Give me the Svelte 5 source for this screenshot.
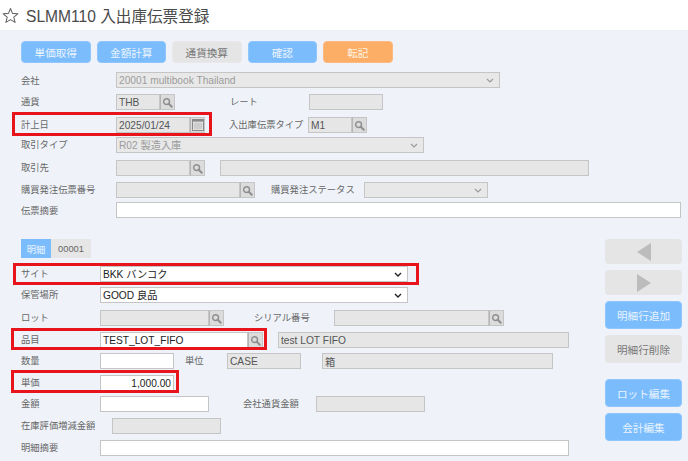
<script>
  const actions = [
    { label: '単価取得', tone: 'blue' },
    { label: '金額計算', tone: 'blue' },
    { label: '通貨換算', tone: 'gray' },
    { label: '確認', tone: 'blue' },
    { label: '転記', tone: 'orange' }
  ];
</script>

{#snippet lens()}
  <svg class="lens" viewBox="0 0 12 12" aria-hidden="true">
    <circle cx="5" cy="5" r="3.2" fill="none" stroke="#8f8f8f" stroke-width="1.6" />
    <path d="M7.4 7.4 L10.6 10.6" stroke="#8f8f8f" stroke-width="2.2" stroke-linecap="round" />
  </svg>
{/snippet}

<div class="page">
  <header class="head">
    <svg class="star" viewBox="0 0 16 16" aria-hidden="true">
      <path d="M8 1.4 L9.9 6 L14.9 6.4 L11.1 9.6 L12.3 14.5 L8 11.9 L3.7 14.5 L4.9 9.6 L1.1 6.4 L6.1 6 Z" fill="none" stroke="#666" stroke-width="1" stroke-linejoin="round" />
    </svg>
    <h1>SLMM110 入出庫伝票登録</h1>
  </header>

  <main class="panel">
    <div class="actions">
      {#each actions as a}
        <button class="act {a.tone}">{a.label}</button>
      {/each}
    </div>

    <div class="row m9">
      <span class="lab up flat">会社</span>
      <select class="f off w384" disabled><option>20001 multibook Thailand</option></select>
    </div>
    <div class="row m6">
      <span class="lab up">通貨</span>
      <div class="grp"><input class="f off dark w44" disabled value="THB" /><span class="sb">{@render lens()}</span></div>
      <span class="lab side g55">レート</span>
      <input class="f off w74" disabled />
    </div>
    <div class="row m7">
      <span class="mark mark-date"></span>
      <span class="lab up">計上日</span>
      <div class="grp">
        <input class="f off dark w74" disabled value="2025/01/24" />
        <span class="sb">
          <svg class="cal" viewBox="0 0 12 12" aria-hidden="true">
            <rect x="0.5" y="0.5" width="11" height="11" fill="#f4f4f4" stroke="#8a8a8a" />
            <rect x="0.5" y="0.5" width="11" height="2.2" fill="#8a8a8a" />
            <path d="M1 5 H11 M1 7 H11 M1 9 H11 M3 3 V11 M5 3 V11 M7 3 V11 M9 3 V11" stroke="#aaa" stroke-width="0.6" />
          </svg>
        </span>
      </div>
      <span class="lab side g24">入出庫伝票タイプ</span>
      <div class="grp"><input class="f off dark w44" disabled value="M1" /><span class="sb">{@render lens()}</span></div>
    </div>
    <div class="row m4">
      <span class="lab up">取引タイプ</span>
      <select class="f off w308" disabled><option>R02 製造入庫</option></select>
    </div>
    <div class="row m7">
      <span class="lab up">取引先</span>
      <div class="grp"><input class="f off w74" disabled /><span class="sb">{@render lens()}</span></div>
      <input class="f off w369 g15" disabled />
    </div>
    <div class="row m6">
      <span class="lab up">購買発注伝票番号</span>
      <div class="grp"><input class="f off w124" disabled /><span class="sb">{@render lens()}</span></div>
      <span class="lab side g16">購買発注ステータス</span>
      <select class="f off w124 g9" disabled><option></option></select>
    </div>
    <div class="row m4">
      <span class="lab up flat">伝票摘要</span>
      <input class="f grow" />
    </div>

    <div class="lower">
      <div class="detail">
        <div class="tabs">
          <span class="tab on">明細</span>
          <span class="tab">00001</span>
        </div>
        <div class="row m8">
          <span class="mark mark-site"></span>
          <span class="lab low">サイト</span>
          <select class="f w308"><option>BKK バンコク</option></select>
        </div>
        <div class="row m5">
          <span class="lab low">保管場所</span>
          <select class="f w308"><option>GOOD 良品</option></select>
        </div>
        <div class="row m7">
          <span class="lab low">ロット</span>
          <div class="grp"><input class="f off w109" disabled /><span class="sb">{@render lens()}</span></div>
          <span class="lab side g30">シリアル番号</span>
          <div class="grp"><input class="f off w155" disabled /><span class="sb">{@render lens()}</span></div>
        </div>
        <div class="row m6">
          <span class="mark mark-item"></span>
          <span class="lab low">品目</span>
          <div class="grp"><input class="f w148" value="TEST_LOT_FIFO" /><span class="sb">{@render lens()}</span></div>
          <input class="f off dark w291 g15" disabled value="test LOT FIFO" />
        </div>
        <div class="row m5">
          <span class="lab low">数量</span>
          <input class="f w74" />
          <span class="lab side g11">単位</span>
          <input class="f off dark w74" disabled value="CASE" />
          <input class="f off dark w231 g21" disabled value="箱" />
        </div>
        <div class="row m6">
          <span class="mark mark-price"></span>
          <span class="lab low">単価</span>
          <input class="f w74 num" value="1,000.00" />
        </div>
        <div class="row m5">
          <span class="lab low">金額</span>
          <input class="f w109" />
          <span class="lab side g34">会社通貨金額</span>
          <input class="f off w109" disabled />
        </div>
        <div class="row m6">
          <span class="lab wide">在庫評価増減金額</span>
          <input class="f off w109" disabled />
        </div>
        <div class="row m6">
          <span class="lab low">明細摘要</span>
          <input class="f w469" />
        </div>
      </div>

      <aside class="side-col">
        <button class="sbtn gray nav" aria-label="前へ">
          <svg viewBox="0 0 14 18" aria-hidden="true"><path d="M14 0 V18 L0 9 Z" fill="#bcbcbc" /></svg>
        </button>
        <button class="sbtn gray nav" aria-label="次へ">
          <svg viewBox="0 0 14 18" aria-hidden="true"><path d="M0 0 V18 L14 9 Z" fill="#bcbcbc" /></svg>
        </button>
        <button class="sbtn blue">明細行追加</button>
        <button class="sbtn gray">明細行削除</button>
        <button class="sbtn blue sep">ロット編集</button>
        <button class="sbtn blue">会計編集</button>
      </aside>
    </div>
  </main>
</div>

<style>
  :global(body) {
    margin: 0;
    background: #eff3f9;
  }
  .page {
    width: 688px;
    height: 461px;
    overflow: hidden;
    font-family: "Liberation Sans", "Noto Sans CJK JP", sans-serif;
    color: #666;
    font-size: 9.3px;
  }
  .head {
    height: 30px;
    background: #fff;
    display: flex;
    align-items: center;
    padding-left: 2px;
    box-sizing: border-box;
    gap: 7px;
  }
  .star { width: 17px; height: 17px; flex: none; }
  h1 {
    margin: 0;
    font-size: 15.6px;
    font-weight: 400;
    color: #4a4a4a;
    white-space: nowrap;
  }
  .panel {
    padding: 11px 6px 0 21px;
  }
  .actions { display: flex; gap: 6px; }
  .act {
    width: 69.5px;
    height: 22px;
    padding: 0;
    border-radius: 4px;
    font: inherit;
    font-size: 10.6px;
    border: 1px solid transparent;
  }
  .blue { background: #7bbcfd; color: #eaf4ff; border-color: #8fc6fd; }
  .gray { background: #e5e5e5; color: #777; border-color: #e8e8e8; }
  .orange { background: #fcae66; color: #fff3e4; border-color: #fdb981; }

  .row {
    position: relative;
    display: flex;
    align-items: center;
    height: 16px;
  }
  .m4 { margin-top: 4px; }
  .m5 { margin-top: 5px; }
  .m6 { margin-top: 6px; }
  .m7 { margin-top: 7px; }
  .m8 { margin-top: 8px; }
  .m9 { margin-top: 9px; }

  .lab { flex: none; white-space: nowrap; position: relative; top: -1px; }
  .flat { top: 0; }
  .up { width: 95px; }
  .low { width: 79px; }
  .wide { width: 91px; }
  .side { color: #666; }

  .f {
    box-sizing: border-box;
    height: 16px;
    border: 1px solid #c5c5c5;
    background: #fff;
    color: #222;
    font: inherit;
    font-size: 10.2px;
    padding: 0 2px;
    margin: 0;
    border-radius: 0;
    outline: none;
    flex: none;
  }
  select.f {
    appearance: none;
    padding: 0 14px 0 2px;
    background-color: #fff;
    background-repeat: no-repeat;
    background-position: right 5px center;
    background-size: 8px 5px;
    background-image: url("data:image/svg+xml,%3Csvg xmlns='http://www.w3.org/2000/svg' viewBox='0 0 8 5'%3E%3Cpath d='M1 1l3 3 3-3' fill='none' stroke='%23222' stroke-width='1.4'/%3E%3C/svg%3E");
  }
  .off { background: #e6e6e6; color: #9c9c9c; opacity: 1; }
  select.off {
    background-color: #e8e8e8;
    background-image: url("data:image/svg+xml,%3Csvg xmlns='http://www.w3.org/2000/svg' viewBox='0 0 8 5'%3E%3Cpath d='M1 1l3 3 3-3' fill='none' stroke='%23999' stroke-width='1.1'/%3E%3C/svg%3E");
  }
  .dark { color: #555; -webkit-text-fill-color: #555; }
  .num { text-align: right; }
  .grow { flex: 1; min-width: 0; margin-right: 1px; }

  .w44 { width: 44px; }
  .w74 { width: 74px; }
  .w109 { width: 109px; }
  .w124 { width: 124px; }
  .w148 { width: 148px; }
  .w155 { width: 155px; }
  .w231 { width: 231px; }
  .w291 { width: 291px; }
  .w308 { width: 308px; }
  .w369 { width: 369px; }
  .w384 { width: 384px; }
  .w469 { width: 469px; }

  .g9 { margin-left: 9px; }
  .g15 { margin-left: 15px; }
  .g21 { margin-left: 21px; }
  .g11 { margin-left: 11px; width: 42px; }
  .g16 { margin-left: 16px; width: 84px; }
  .g24 { margin-left: 24px; width: 79px; }
  .g30 { margin-left: 30px; width: 80px; }
  .g34 { margin-left: 34px; width: 73px; }
  .g55 { margin-left: 55px; width: 79px; }

  .grp { display: flex; flex: none; }
  .sb {
    box-sizing: border-box;
    width: 15px;
    height: 16px;
    background: #dcdcdc;
    border: 1px solid #c5c5c5;
    border-left-color: #b5b5b5;
    display: flex;
    align-items: center;
    justify-content: center;
    flex: none;
  }
  .lens { width: 11px; height: 11px; }
  .cal { width: 12px; height: 12px; }

  .mark {
    position: absolute;
    box-sizing: border-box;
    border: 3px solid #e8141c;
    pointer-events: none;
    z-index: 2;
  }
  .mark-date { left: -9px; top: -5px; width: 200px; height: 24px; }
  .mark-site { left: -8px; top: -3px; width: 406px; height: 22px; }
  .mark-item { left: -10px; top: -4px; width: 256px; height: 22px; }
  .mark-price { left: -10px; top: -5px; width: 168px; height: 23px; }

  .lower {
    display: flex;
    justify-content: space-between;
    margin-top: 21px;
  }
  .tabs { display: flex; height: 19px; }
  .tab {
    display: flex;
    align-items: center;
    justify-content: center;
    width: 40px;
    background: #e6e6e6;
    color: #666;
  }
  .tab.on { width: 30px; background: #7bbcfd; color: #eaf4ff; }

  .side-col {
    width: 77px;
    display: flex;
    flex-direction: column;
    gap: 6px;
  }
  .sbtn {
    height: 28px;
    padding: 0;
    border-radius: 4px;
    font: inherit;
    font-size: 10.6px;
    border: 1px solid transparent;
  }
  .blue.sbtn { border-color: #8fc6fd; }
  .nav {
    height: 25px;
    display: flex;
    align-items: center;
    justify-content: center;
  }
  .nav svg { width: 14px; height: 18px; }
  .sep { margin-top: 10px; }
</style>
